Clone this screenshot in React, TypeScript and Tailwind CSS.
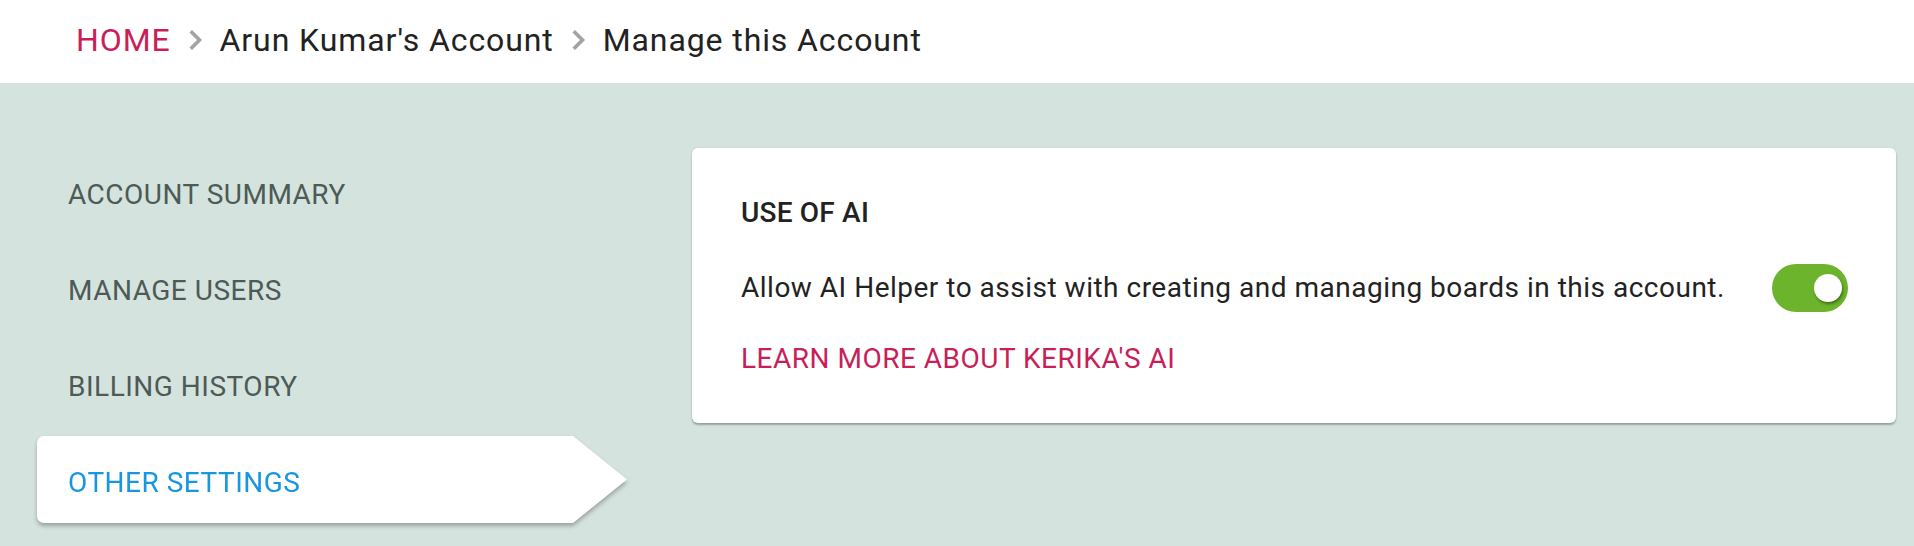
import { useState } from "react";

const navItems = ["ACCOUNT SUMMARY", "MANAGE USERS", "BILLING HISTORY", "OTHER SETTINGS"];

function Chevron() {
  return (
    <svg className="h-[20px] w-[14px] ml-[18px] mr-[17px]" viewBox="0 0 14 20" fill="none">
      <path d="M3 2.5 L10.5 10 L3 17.5" stroke="#a3a3a3" strokeWidth="3.6" strokeLinecap="square" />
    </svg>
  );
}

export default function App() {
  const [active, setActive] = useState<string>("OTHER SETTINGS");
  const [aiOn, setAiOn] = useState<boolean>(true);

  return (
    <div className="min-h-screen bg-[#d5e3df] font-['Roboto',sans-serif]">
      {/* breadcrumb */}
      <div className="h-[83px] bg-white flex items-center pl-[76px] pb-[3px] text-[32px] tracking-[0.9px] text-[#222]">
        <a className="text-[#c81f59] cursor-pointer">HOME</a>
        <Chevron />
        <span>Arun Kumar's Account</span>
        <Chevron />
        <span>Manage this Account</span>
      </div>

      <div className="flex pt-[65px] pl-[37px] pr-[18px] gap-[65px] tracking-[0.5px]">
        {/* side nav */}
        <nav className="w-[590px] shrink-0 flex flex-col gap-[9px]">
          {navItems.map((item) =>
            item === active ? (
              <div key={item} className="drop-shadow-[0_3px_2px_rgba(0,0,0,0.28)]">
                <div className="h-[87px] bg-white rounded-l-[7px] flex items-center pt-[7px] pl-[31px] text-[28px] text-[#1896e2] [clip-path:polygon(0_0,536px_0,590px_43.5px,536px_87px,0_87px)]">
                  {item}
                </div>
              </div>
            ) : (
              <button
                key={item}
                onClick={() => setActive(item)}
                className="h-[87px] flex items-center pt-[7px] pl-[31px] text-[28px] text-[#4d5a56] text-left"
              >
                {item}
              </button>
            )
          )}
        </nav>

        {/* content card */}
        <div className="flex-1 self-start bg-white rounded-[6px] shadow-[0_2px_2px_rgba(0,0,0,0.28),0_0_3px_rgba(0,0,0,0.06)] pt-[44px] pb-[43px] pl-[49px] pr-[48px]">
          <h2 className="text-[28px] leading-[42px] font-medium tracking-[0.2px] text-[#222]">USE OF AI</h2>
          <div className="mt-[30px] flex items-center justify-between">
            <p className="text-[28px] leading-[42px] text-[#222]">
              Allow AI Helper to assist with creating and managing boards in this account.
            </p>
            <button
              onClick={() => setAiOn(!aiOn)}
              className={`relative h-[48px] w-[76px] rounded-full ${aiOn ? "bg-[#6bb42c]" : "bg-[#bdbdbd]"}`}
            >
              <span
                className={`absolute top-[10px] h-[28px] w-[28px] rounded-full bg-white shadow-[1px_2px_3px_rgba(0,0,0,0.4)] ${aiOn ? "left-[42px]" : "left-[6px]"}`}
              />
            </button>
          </div>
          <a className="block mt-[26px] text-[28px] leading-[42px] text-[#c81f59] cursor-pointer">
            LEARN MORE ABOUT KERIKA'S AI
          </a>
        </div>
      </div>
    </div>
  );
}
